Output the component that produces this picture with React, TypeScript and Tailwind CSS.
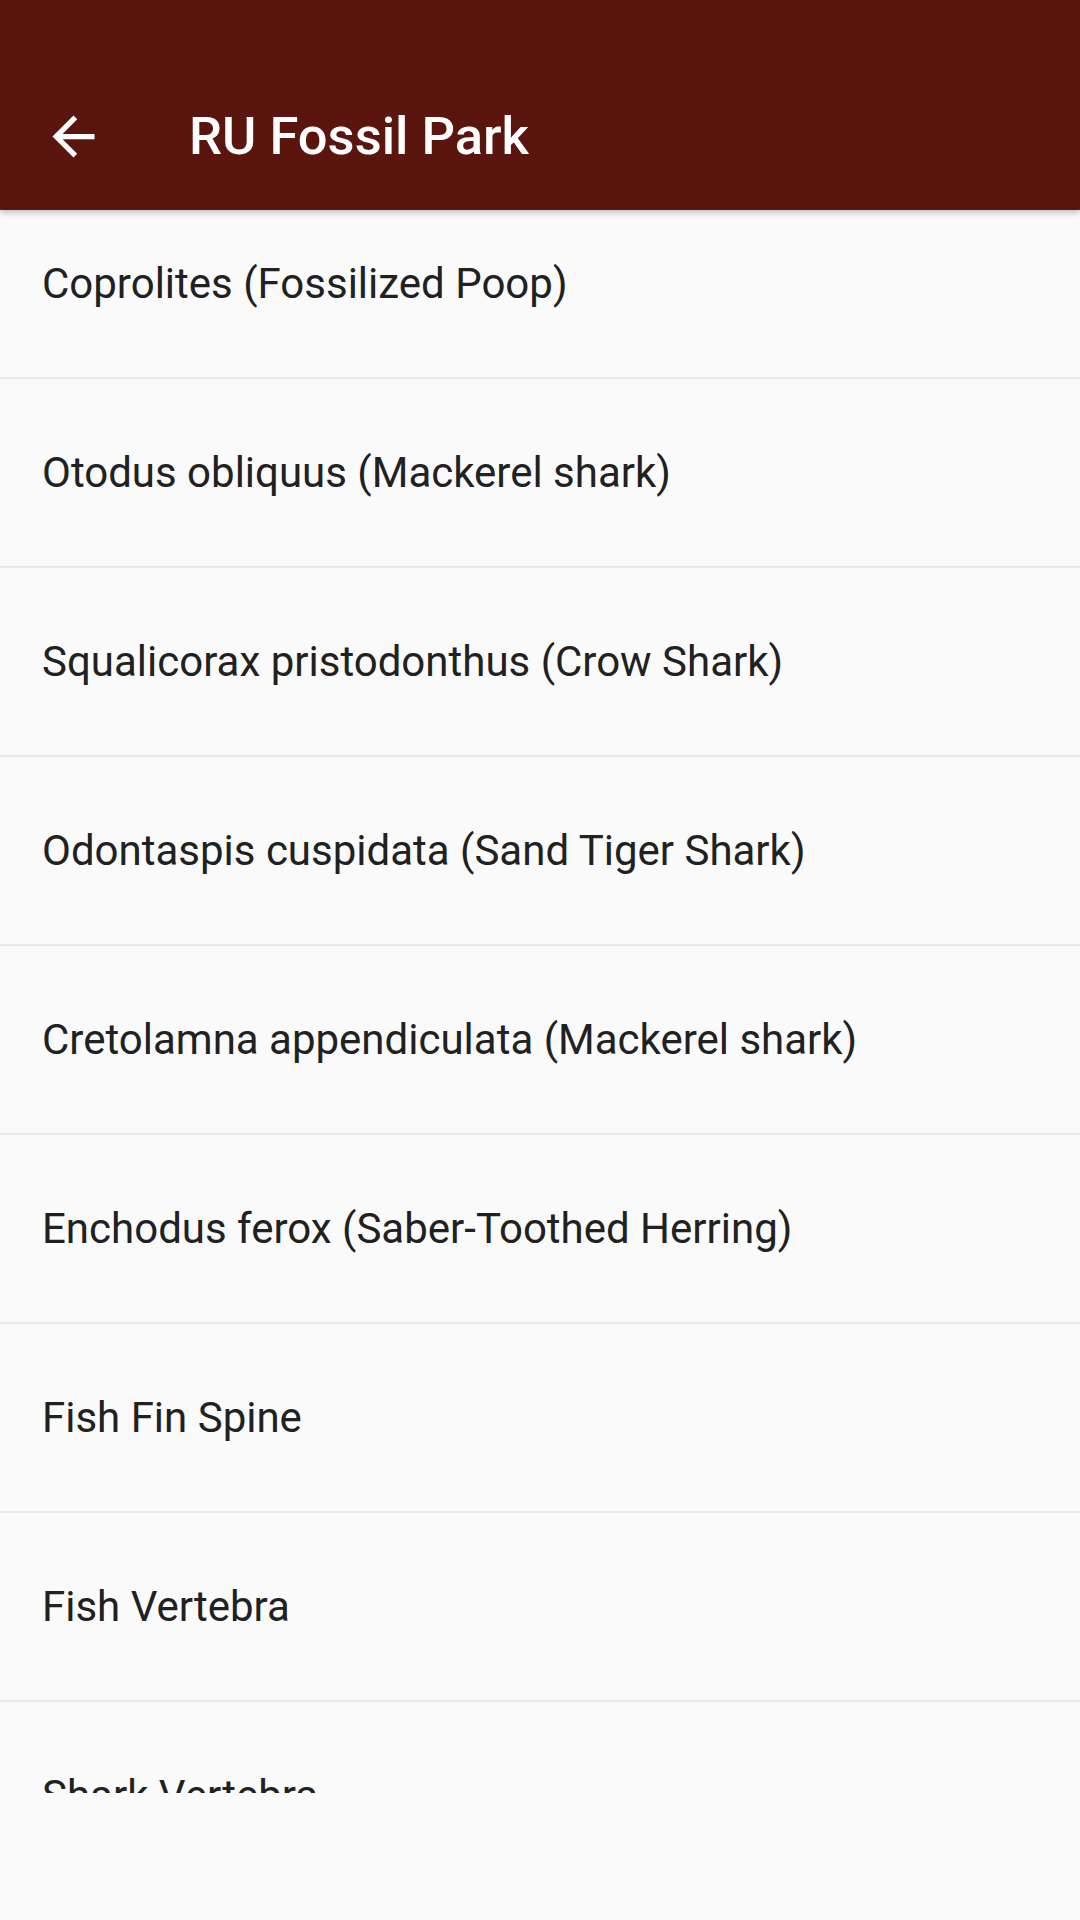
const fossils = [
  "Coprolites (Fossilized Poop)",
  "Otodus obliquus (Mackerel shark)",
  "Squalicorax pristodonthus (Crow Shark)",
  "Odontaspis cuspidata (Sand Tiger Shark)",
  "Cretolamna appendiculata (Mackerel shark)",
  "Enchodus ferox (Saber-Toothed Herring)",
  "Fish Fin Spine",
  "Fish Vertebra",
  "Shark Vertebra",
];

function BackArrow() {
  return (
    <svg viewBox="0 0 24 24" className="h-[63px] w-[63px]" fill="currentColor">
      <path d="M20 11H7.83l5.59-5.59L12 4l-8 8 8 8 1.41-1.41L7.83 13H20v-2z" />
    </svg>
  );
}

export default function App() {
  return (
    <div
      className="flex h-[1920px] w-[1080px] flex-col overflow-hidden bg-[#fafafa]"
      style={{ fontFamily: "Roboto, 'Noto Sans', sans-serif" }}
    >
      {/* App bar (status bar area + toolbar) */}
      <header className="relative z-10 flex h-[210px] shrink-0 flex-col bg-[#5a160e] shadow-[0_3px_6px_rgba(0,0,0,0.22)]">
        <div className="h-[63px]" />
        <div className="flex h-[147px] items-center">
          <button className="ml-[42px] flex h-[63px] w-[63px] items-center justify-center text-white">
            <BackArrow />
          </button>
          <h1 className="ml-[84px] text-[52.5px] font-medium leading-none text-white">
            RU Fossil Park
          </h1>
        </div>
      </header>

      {/* Scrollable list, scrolled a little */}
      <div className="h-[1583px] shrink-0 overflow-hidden">
        <ul className="-mt-[20px]">
          {fossils.map((name) => (
            <li
              key={name}
              className="flex h-[189px] items-center border-b-2 border-[#e9e9e9] pl-[42px] text-[42px] text-[#212121]"
            >
              {name}
            </li>
          ))}
        </ul>
      </div>
    </div>
  );
}
